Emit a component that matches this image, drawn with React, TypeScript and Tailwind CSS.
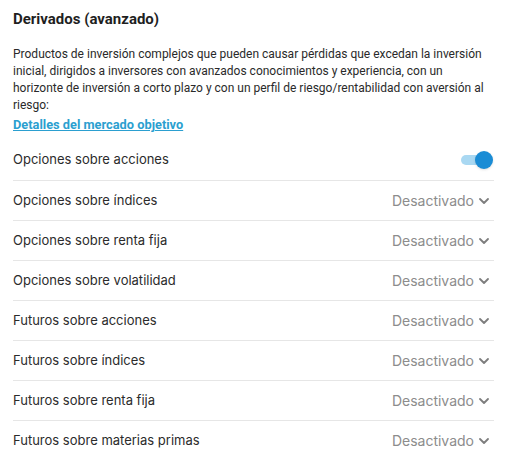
import { ChevronDown } from "lucide-react";

const rows = [
  "Opciones sobre índices",
  "Opciones sobre renta fija",
  "Opciones sobre volatilidad",
  "Futuros sobre acciones",
  "Futuros sobre índices",
  "Futuros sobre renta fija",
  "Futuros sobre materias primas",
];

export default function App() {
  return (
    <div className="min-h-[463px] w-[505px] bg-white pl-[13px] pr-[11px] pt-[10px] text-[#222]">
      <h2 className="font-['Roboto',sans-serif] text-[15px] font-bold leading-[18px] text-[#1f1f1f]">
        Derivados (avanzado)
      </h2>

      <p className="mt-[18px] w-[474px] font-['Roboto',sans-serif] text-[12px] leading-[17px] text-[#2a2a2a]">
        Productos de inversión complejos que pueden causar pérdidas que excedan la inversión
        inicial, dirigidos a inversores con avanzados conocimientos y experiencia, con un
        horizonte de inversión a corto plazo y con un perfil de riesgo/rentabilidad con aversión al
        riesgo:
      </p>
      <a
        href="#"
        className="mt-[2px] block font-['Roboto',sans-serif] text-[12.8px] font-bold leading-[17px] text-[#2b9fd0] underline"
      >
        Detalles del mercado objetivo
      </a>

      <div className="mt-[7px] font-['Inter',sans-serif] text-[14px]">
        <div className="flex h-[40px] items-center justify-between">
          <span className="text-[13px] text-[#2b2b2b]">Opciones sobre acciones</span>
          <div className="relative mr-[1px] h-[18px] w-[32px]">
            <div className="absolute left-0 right-[2px] top-[4px] h-[10px] rounded-full bg-[#a9d8f2]" />
            <div className="absolute right-0 top-0 h-[18px] w-[18px] rounded-full bg-[#1a8cd5] shadow-sm" />
          </div>
        </div>
        {rows.map((r) => (
          <div
            key={r}
            className="flex h-[40px] items-center justify-between border-t border-[#e6e6e6]"
          >
            <span className="text-[13px] text-[#2b2b2b]">{r}</span>
            <span className="mr-[2px] flex items-center gap-[2px] text-[#8c8c8c]">
              Desactivado
              <ChevronDown className="mt-[1px] h-[16px] w-[16px] text-[#7d7d7d]" strokeWidth={2.75} />
            </span>
          </div>
        ))}
      </div>
    </div>
  );
}
